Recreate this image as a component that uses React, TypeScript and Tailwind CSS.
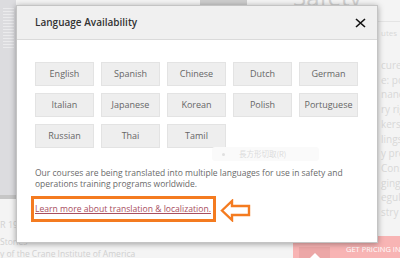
import React from "react";

const langs = [
  "English", "Spanish", "Chinese", "Dutch", "German",
  "Italian", "Japanese", "Korean", "Polish", "Portuguese",
  "Russian", "Thai", "Tamil",
];

const rightFrags = ["cure", "e: po", "nane", "ry rig", "kers v", "lings.", "y prec", "Consi", "ging p", "egula", "stry t"];

export default function App() {
  return (
    <div className="relative w-[400px] h-[258px] overflow-hidden bg-[#f4f4f4] font-['Open_Sans',sans-serif]">
      {/* background page */}
      <div className="flex flex-col h-full">
        <div className="flex h-[236px]">
          <div className="w-[16px] shrink-0 flex flex-col">
            <div className="h-[195px] bg-[#dcdcdf] flex justify-center pt-[8px]">
              <div className="w-[11px] h-[40px] bg-[repeating-linear-gradient(0deg,#ebebed_0px,#ebebed_1px,#dcdcdf_1px,#dcdcdf_3px)]" />
            </div>
            <div className="h-[4px] bg-[#c6c6c6]" />
            <div className="pt-[20px] text-[9px] leading-[12px] text-[#d2d2d2] whitespace-nowrap">R 19</div>
          </div>
          <div className="flex-1 flex">
            <div className="ml-[184px] w-[47px] h-[5px] bg-[#cdcdcd]" />
            <div className="ml-[46px] mt-[-17px] text-[24px] leading-[28px] text-[#d0d0d0] whitespace-nowrap">Safety</div>
          </div>
          <div className="w-[22px] shrink-0 flex flex-col overflow-hidden">
            <div className="h-[22px] border-b border-[#e4e4e4]" />
            <div className="pl-[3px] pt-[6px] text-[8px] leading-[10px] text-[#d8d8d8] whitespace-nowrap">utes</div>
            <div className="pl-[3px] pt-[20px] flex flex-col text-[10px] leading-[14.7px] text-[#d8d8d8] whitespace-nowrap">
              {rightFrags.map((f) => (
                <span key={f}>{f}</span>
              ))}
            </div>
          </div>
        </div>
        <div className="flex h-[22px]">
          <div className="flex-1 min-w-0 text-[8.5px] leading-[12px] text-[#d0d0d0] whitespace-nowrap">
            <div>Stories</div>
            <div>y of the Crane Institute of America</div>
          </div>
          <div className="w-[107px] shrink-0 bg-[#f8b4b4] flex items-end overflow-hidden">
            <div className="ml-[6px] w-[31px] shrink-0 h-[11px] bg-[#eca7a7] flex justify-center items-end">
              <div className="w-0 h-0 border-l-[5px] border-r-[5px] border-b-[5px] border-l-transparent border-r-transparent border-b-white" />
            </div>
            <span className="ml-[16px] mb-[4px] text-[7.5px] leading-[10px] text-white whitespace-nowrap">GET PRICING IN</span>
          </div>
        </div>
      </div>

      {/* modal */}
      <div className="absolute left-[16px] top-[5px] w-[362px] h-[238px] bg-white border border-[#c4c4c4] shadow-[0_1px_6px_rgba(0,0,0,0.35)] flex flex-col">
        <div className="h-[34px] bg-[#f0f0f0] border-b border-[#dadada] flex items-center justify-between pl-[18px] pr-[10px]">
          <span className="text-[10px] font-semibold text-[#333]">Language Availability</span>
          <svg width="11" height="10" viewBox="0 0 11 10" className="mr-[1px]">
            <path d="M1 1 L10 9 M10 1 L1 9" stroke="#111" strokeWidth="1.6" fill="none" />
          </svg>
        </div>
        <div className="relative px-[18px] pt-[22px]">
          <div className="grid grid-cols-[repeat(5,59px)] gap-x-[7px] gap-y-[7px]">
            {langs.map((l) => (
              <div
                key={l}
                className="h-[24px] bg-[#eeeeee] border border-[#e3e3e3] flex items-center justify-center text-[9px] text-[#666]"
              >
                {l}
              </div>
            ))}
          </div>
          <div className="absolute left-[195px] top-[107px] w-[107px] h-[14px] rounded-[3px] bg-[#fafafa] flex items-center text-[7.5px] text-[#dcdcdc] font-['Noto_Sans_CJK_JP',sans-serif]">
            <span className="ml-[10px] mr-[14px] w-[3px] h-[3px] rounded-full bg-[#e0e0e0]" />
            長方形切取(R)
          </div>
          <p className="mt-[19px] text-[8.5px] leading-[11px] text-[#6a6a6a]">
            Our courses are being translated into multiple languages for use in safety and operations training programs worldwide.
          </p>
          <div className="mt-[7px] ml-[-4px] flex items-center gap-[4px]">
            <div className="w-[185px] h-[26px] border-[3px] border-[#f47b20] flex items-center pl-[1px]">
              <span className="text-[8.6px] text-[#a84d5e] underline whitespace-nowrap">Learn more about translation &amp; localization.</span>
            </div>
            <svg width="31" height="23" viewBox="0 0 31 23" className="mt-[3px]">
              <path d="M2 11.5 L12 2 L12 7 L29 7 L29 16 L12 16 L12 21 Z" stroke="#f47b20" strokeWidth="2.4" strokeLinejoin="miter" fill="none" />
            </svg>
          </div>
        </div>
      </div>
    </div>
  );
}
